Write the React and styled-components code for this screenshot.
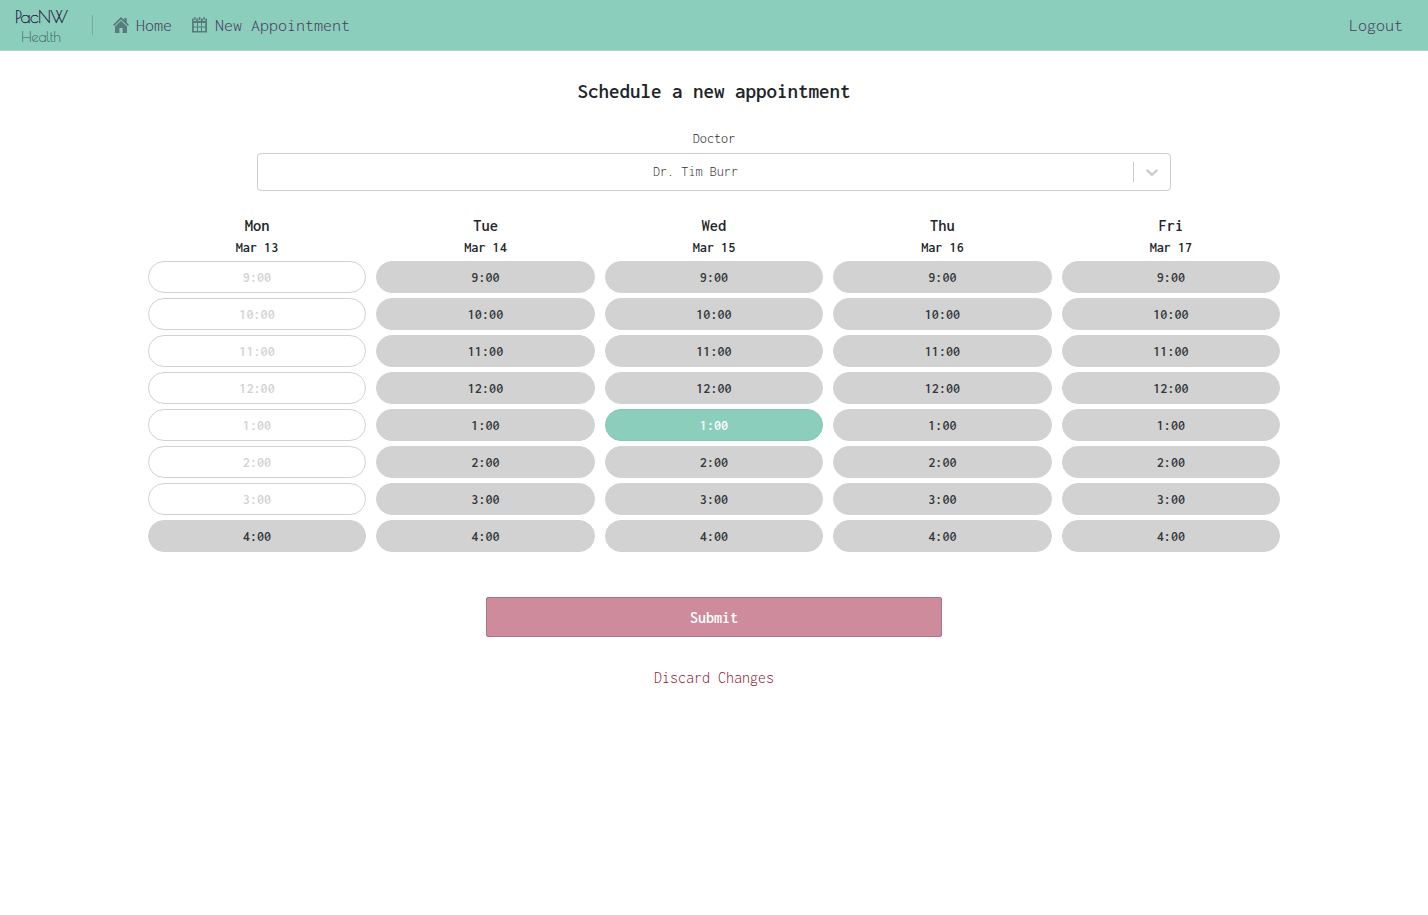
import React from 'react';
import styled, { createGlobalStyle, css } from 'styled-components';

const Global = createGlobalStyle`
  * { box-sizing: border-box; }
  body {
    margin: 0;
    background: #fff;
    color: #212529;
    font-family: "Inconsolata", "Noto Sans Mono CJK JP", "DejaVu Sans Mono", monospace;
  }
  button { font-family: inherit; }
`;

const NavBar = styled.nav`
  display: flex;
  align-items: center;
  height: 51px;
  background: #8bcebb;
  border-bottom: 1px solid #c3cdca;
  padding: 0 25px 0 15px;
`;

const Brand = styled.div`
  display: flex;
  flex-direction: column;
  align-items: center;
  width: 52px;
  height: 50px;
  padding-top: 7px;
  font-family: "Poiret One", Lato, sans-serif;
  font-weight: 400;
  white-space: nowrap;
`;

const BrandName = styled.span`
  font-size: 17.5px;
  line-height: 20px;
  letter-spacing: -0.5px;
  color: #26123f;
  -webkit-text-stroke: 0.25px #26123f;
`;

const BrandSub = styled.span`
  font-size: 14px;
  line-height: 20px;
  letter-spacing: -0.1px;
  color: #3d6068;
  -webkit-text-stroke: 0.15px #3d6068;
`;

const Divider = styled.span`
  width: 1px;
  height: 20px;
  margin: 0 20px 0 25px;
  background: #73aea1;
`;

const NavLink = styled.a`
  display: flex;
  align-items: center;
  gap: 7px;
  font-size: 18px;
  line-height: 24px;
  font-weight: 300;
  color: #483a60;
  margin-right: ${p => (p.$last ? 0 : '19px')};
  margin-left: ${p => (p.$last ? 'auto' : 0)};

  svg { display: block; fill: #587b7d; }
`;

const Main = styled.main`
  display: flex;
  flex-direction: column;
  align-items: center;
  width: 80%;
  margin: 0 auto;
`;

const Title = styled.h1`
  margin: 26px 0 0;
  font-size: 21px;
  line-height: 28px;
  font-weight: 600;
`;

const Label = styled.label`
  margin-top: 24px;
  font-size: 14.2px;
  line-height: 20px;
  font-weight: 300;
  color: #212529;
`;

const Select = styled.div`
  display: flex;
  align-items: center;
  width: 80%;
  height: 38px;
  margin-top: 4px;
  border: 1px solid #ccc;
  border-radius: 4px;
`;

const SelectValue = styled.span`
  flex: 1;
  text-align: center;
  font-size: 14.2px;
  line-height: 20px;
  font-weight: 300;
  color: #333;
`;

const SelectToggle = styled.span`
  display: flex;
  align-items: center;
  justify-content: center;
  width: 37px;
  height: 20px;
  border-left: 1px solid #ccc;
  svg { fill: #ccc; }
`;

const Week = styled.div`
  display: grid;
  grid-template-columns: repeat(5, 1fr);
  width: 100%;
  margin-top: 24px;
`;

const Day = styled.section`
  display: flex;
  flex-direction: column;
  gap: 5px;
  padding: 0 5px;
  text-align: center;
`;

const DayHead = styled.header`
  display: flex;
  flex-direction: column;
  height: 41px;
  font-weight: 600;
`;

const DayName = styled.span`
  font-size: 16.5px;
  line-height: 22px;
`;

const DayDate = styled.span`
  font-size: 14.2px;
  line-height: 21px;
`;

const Slot = styled.button`
  height: 32px;
  padding: 1px 0 0;
  border: 1px solid #d2d2d2;
  border-radius: 16px;
  background: #d2d2d2;
  color: #33373b;
  font-size: 14.2px;
  line-height: 30px;
  font-weight: 600;
  ${p => p.$state === 'taken' && css`background: #fff; color: #d2d2d2;`}
  ${p => p.$state === 'selected' && css`background: #8bcebb; border-color: #84c7b4; color: #fff;`}
`;

const Submit = styled.button`
  width: 40%;
  height: 40px;
  margin-top: 45px;
  padding: 0;
  border: 1px solid #a7768a;
  border-radius: 2px;
  background: #cd8b9c;
  color: #fff;
  font-size: 16px;
  font-weight: 600;
`;

const Discard = styled.a`
  margin-top: 29px;
  font-size: 16px;
  line-height: 24px;
  font-weight: 300;
  color: #8c2030;
`;

const HomeIcon = () => (
  <svg width="16" height="16" viewBox="0 0 16 16">
    <path d="M8 0 11.3 3.1V1h2.4v4.4L16 7.7 14.9 9 8 2.5 1.1 9 0 7.7Z" />
    <path d="M8 3.8 14 9.4V16H9.6V11H6.4V16H2V9.4Z" />
  </svg>
);

const CalendarIcon = () => (
  <svg width="17" height="17" viewBox="-1 0 17 17">
    <path
      fillRule="evenodd"
      d="M0 1.5h1.6V4h2.6V1.5h2V4h2.6V1.5h2V4h2.6V1.5H15V15.5H0ZM1.8 6v3.4h3.2V6Zm4.2 0v3.4h3V6Zm4 0v3.4h3.2V6ZM1.8 10.4v3.5h3.2v-3.5Zm4.2 0v3.5h3v-3.5Zm4 0v3.5h3.2v-3.5Z"
    />
    <path d="M2.2 0h1.4v3h-1.4ZM6.8 0h1.4v3H6.8ZM11.4 0h1.4v3h-1.4Z" />
  </svg>
);

const Chevron = () => (
  <svg width="20" height="20" viewBox="0 0 20 20">
    <path d="M4.516 7.548c0.436-0.446 1.043-0.481 1.576 0l3.908 3.747 3.908-3.747c0.533-0.481 1.141-0.446 1.574 0 0.436 0.445 0.408 1.197 0 1.615-0.406 0.418-4.695 4.502-4.695 4.502-0.217 0.223-0.502 0.335-0.787 0.335s-0.57-0.112-0.789-0.335c0 0-4.287-4.084-4.695-4.502s-0.436-1.17 0-1.615z" />
  </svg>
);

const days = [
  ['Mon', 'Mar 13'],
  ['Tue', 'Mar 14'],
  ['Wed', 'Mar 15'],
  ['Thu', 'Mar 16'],
  ['Fri', 'Mar 17'],
];
const times = ['9:00', '10:00', '11:00', '12:00', '1:00', '2:00', '3:00', '4:00'];

const slotState = (day, time) => {
  if (day === 'Mon' && time !== '4:00') return 'taken';
  if (day === 'Wed' && time === '1:00') return 'selected';
  return 'open';
};

export default function App() {
  return (
    <>
      <Global />
      <NavBar>
        <Brand>
          <BrandName>PacNW</BrandName>
          <BrandSub>Health</BrandSub>
        </Brand>
        <Divider />
        <NavLink><HomeIcon />Home</NavLink>
        <NavLink><CalendarIcon />New Appointment</NavLink>
        <NavLink $last>Logout</NavLink>
      </NavBar>
      <Main>
        <Title>Schedule a new appointment</Title>
        <Label>Doctor</Label>
        <Select>
          <SelectValue>Dr. Tim Burr</SelectValue>
          <SelectToggle><Chevron /></SelectToggle>
        </Select>
        <Week>
          {days.map(([name, date]) => (
            <Day key={name}>
              <DayHead>
                <DayName>{name}</DayName>
                <DayDate>{date}</DayDate>
              </DayHead>
              {times.map(time => (
                <Slot key={time} $state={slotState(name, time)}>{time}</Slot>
              ))}
            </Day>
          ))}
        </Week>
        <Submit>Submit</Submit>
        <Discard>Discard Changes</Discard>
      </Main>
    </>
  );
}
